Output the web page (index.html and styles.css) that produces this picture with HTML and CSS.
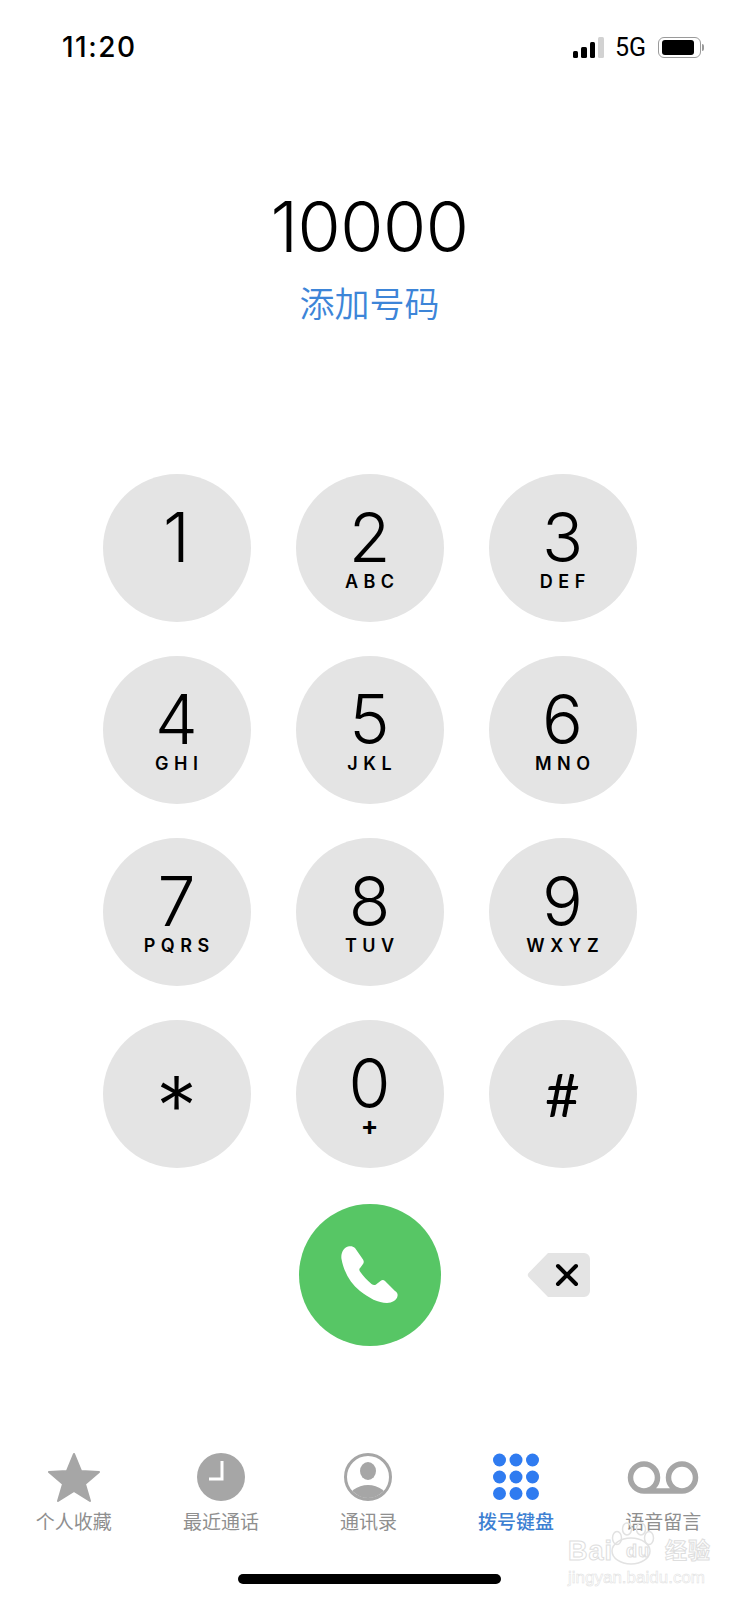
FILE: index.html
```html
<!DOCTYPE html>
<html lang="zh-CN">
<head>
    <meta charset="UTF-8">
    <title>拨号键盘</title>
    <link rel="stylesheet" href="styles.css">
</head>
<body>
    <div class="screen">
        <div class="status-bar">
            <span class="time">11:20</span>
            <div class="status-right">
                <div class="signal">
                    <span class="bar bar-1"></span>
                    <span class="bar bar-2"></span>
                    <span class="bar bar-3"></span>
                    <span class="bar bar-4"></span>
                </div>
                <span class="network">5G</span>
                <div class="battery">
                    <div class="battery-level"></div>
                </div>
                <span class="battery-cap"></span>
            </div>
        </div>

        <div class="number">10000</div>
        <div class="add-number">添加号码</div>

        <div class="keypad">
            <div class="key"><span class="digit">1</span></div>
            <div class="key"><span class="digit">2</span><span class="letters">ABC</span></div>
            <div class="key"><span class="digit">3</span><span class="letters">DEF</span></div>
            <div class="key"><span class="digit">4</span><span class="letters">GHI</span></div>
            <div class="key"><span class="digit">5</span><span class="letters">JKL</span></div>
            <div class="key"><span class="digit">6</span><span class="letters">MNO</span></div>
            <div class="key"><span class="digit">7</span><span class="letters">PQRS</span></div>
            <div class="key"><span class="digit">8</span><span class="letters">TUV</span></div>
            <div class="key"><span class="digit">9</span><span class="letters">WXYZ</span></div>
            <div class="key key-symbol"><span class="star">*</span></div>
            <div class="key"><span class="digit">0</span><span class="plus">+</span></div>
            <div class="key key-symbol"><span class="hash">#</span></div>
        </div>

        <div class="call-row">
            <div class="call-button">
                <svg width="58" height="58" viewBox="0 0 58 58">
                    <path fill="#fff" d="M7 .5C3 1.500-.5 7 .5 13 3 26 9 37 19 45c9 7 18 12 27 12 5 0 10-3 10.500-7 .5-2-.5-4-2.500-5L44 35c-1.500-1.500-3-1.500-4.500 0L35 38.500c-1.500 1-3 .5-4.500-.5-4.500-4-8.500-8-11.500-12.500-1-1.500-1-3 .5-4L22 18c1-1.500 1-3 0-4.500L14 2c-2-2-4.500-2-7-1.500z"/>
                </svg>
            </div>
            <svg class="backspace" width="64" height="46" viewBox="0 0 64 46">
                <path fill="#e4e4e4" d="M21 1h36a6 6 0 0 1 6 6v32a6 6 0 0 1-6 6H21L2 25.500a3.500 3.500 0 0 1 0-5z"/>
                <path stroke="#000" stroke-width="4" stroke-linecap="round" d="M31 14l18 18M49 14L31 32"/>
            </svg>
        </div>

        <div class="tab-bar">
            <div class="tab">
                <svg class="tab-icon" width="54" height="50" viewBox="0 0 54 50">
                    <path fill="#a6a6a6" stroke="#a6a6a6" stroke-width="2" stroke-linejoin="round" d="M27 2l7 17 18 1-14 12 5 17-16-10-16 10 5-17L2 20l18-1z"/>
                </svg>
                <span>个人收藏</span>
            </div>
            <div class="tab">
                <svg class="tab-icon" width="54" height="50" viewBox="0 0 54 50">
                    <circle cx="27" cy="25" r="24" fill="#a6a6a6"/>
                    <path fill="none" stroke="#fff" stroke-width="3" d="M28 9v18H15"/>
                </svg>
                <span>最近通话</span>
            </div>
            <div class="tab">
                <svg class="tab-icon" width="54" height="50" viewBox="0 0 54 50">
                    <defs>
                        <clipPath id="face"><circle cx="27" cy="25" r="21"/></clipPath>
                    </defs>
                    <circle cx="27" cy="25" r="22.500" fill="none" stroke="#a6a6a6" stroke-width="3"/>
                    <ellipse cx="27" cy="19" rx="8" ry="9" fill="#a6a6a6"/>
                    <ellipse cx="27" cy="48" rx="20" ry="15" fill="#a6a6a6" clip-path="url(#face)"/>
                </svg>
                <span>通讯录</span>
            </div>
            <div class="tab tab-active">
                <svg class="tab-icon" width="54" height="50" viewBox="0 0 54 50">
                    <g fill="#2f7bf0">
                        <circle cx="10.500" cy="8" r="6.500"/><circle cx="27" cy="8" r="6.500"/><circle cx="43.500" cy="8" r="6.500"/>
                        <circle cx="10.500" cy="25" r="6.500"/><circle cx="27" cy="25" r="6.500"/><circle cx="43.500" cy="25" r="6.500"/>
                        <circle cx="10.500" cy="41.500" r="6.500"/><circle cx="27" cy="41.500" r="6.500"/><circle cx="43.500" cy="41.500" r="6.500"/>
                    </g>
                </svg>
                <span>拨号键盘</span>
            </div>
            <div class="tab">
                <svg class="tab-icon" width="72" height="50" viewBox="0 0 72 50">
                    <path fill="none" stroke="#a6a6a6" stroke-width="5.500" d="M17 39h38M17 39a13.500 13.500 0 1 1 0-27 13.500 13.500 0 0 1 0 27zM55 39a13.500 13.500 0 1 1 0-27 13.500 13.500 0 0 1 0 27z"/>
                </svg>
                <span>语音留言</span>
            </div>
        </div>

        <div class="home-indicator"></div>

        <div class="watermark">
            <svg class="paw" width="50" height="48" viewBox="0 0 50 48">
                <g fill="none" stroke="#e2e2e2" stroke-width="1.500">
                    <ellipse cx="9" cy="16" rx="4.500" ry="6.500"/>
                    <ellipse cx="19" cy="7" rx="4.500" ry="6"/>
                    <ellipse cx="33" cy="7" rx="4.500" ry="6"/>
                    <ellipse cx="41" cy="16" rx="4.500" ry="6.500"/>
                    <ellipse cx="23" cy="29" rx="19" ry="13"/>
                </g>
            </svg>
            <div class="watermark-name">
                <span>Bai</span>
                <span class="watermark-du">du</span>
                <span class="watermark-cn">经验</span>
            </div>
            <div class="watermark-url">jingyan.baidu.com</div>
        </div>
    </div>
</body>
</html>
```

FILE: styles.css
```css
* {
    margin: 0;
    padding: 0;
    box-sizing: border-box;
}

body {
    background: #fff;
    font-family: Inter, "Noto Sans CJK SC", sans-serif;
    color: #000;
}

.screen {
    position: relative;
    width: 739px;
    height: 1600px;
    overflow: hidden;
    display: flex;
    flex-direction: column;
    align-items: center;
}

/* Status bar */
.status-bar {
    width: 100%;
    height: 94px;
    padding: 30px 35px 0 62px;
    display: flex;
    justify-content: space-between;
    align-items: flex-start;
}

.time {
    font-size: 28px;
    line-height: 34px;
    font-weight: 500;
    letter-spacing: 1.500px;
}

.status-right {
    display: flex;
    align-items: center;
    height: 34px;
}

.signal {
    display: flex;
    align-items: flex-end;
    gap: 3px;
    height: 21px;
}

.bar {
    width: 5.500px;
    background: #000;
    border-radius: 1.500px;
}

.bar-1 { height: 7px; }
.bar-2 { height: 11px; }
.bar-3 { height: 16px; }
.bar-4 { height: 21px; background: #d2d2d2; }

.network {
    margin-left: 11px;
    font-size: 25px;
    font-weight: 400;
    font-family: Roboto, sans-serif;
}

.battery {
    margin-left: 12px;
    width: 43px;
    height: 21px;
    padding: 2px 3px;
    border: 1.500px solid #9a9a9a;
    border-radius: 6px;
}

.battery-level {
    width: 32px;
    height: 100%;
    background: #000;
    border-radius: 3px;
}

.battery-cap {
    margin-left: 1px;
    width: 2px;
    height: 7px;
    background: #9a9a9a;
    border-radius: 0 2px 2px 0;
}

/* Number display */
.number {
    margin-top: 98px;
    font-size: 70px;
    line-height: 70px;
    font-weight: 350;
    letter-spacing: -0.5px;
}

.add-number {
    margin-top: 18px;
    font-family: "Noto Sans CJK SC", sans-serif;
    font-size: 35px;
    line-height: 44px;
    font-weight: 350;
    color: #3d85d8;
}

/* Keypad */
.keypad {
    margin-top: 150px;
    display: grid;
    grid-template-columns: repeat(3, 148px);
    gap: 34px 45px;
}

.key {
    width: 148px;
    height: 148px;
    border-radius: 50%;
    background: #e4e4e4;
    display: flex;
    flex-direction: column;
    align-items: center;
    padding-top: 33px;
}

.key-symbol {
    padding-top: 0;
    justify-content: center;
}

.digit {
    font-size: 68px;
    line-height: 60px;
    font-weight: 350;
}

.letters {
    margin-top: 5px;
    font-size: 18px;
    line-height: 20px;
    font-weight: 600;
    letter-spacing: 5.500px;
    margin-right: -5.500px;
}

.plus {
    font-size: 26px;
    line-height: 26px;
    font-weight: 700;
}

.star {
    font-size: 82px;
    line-height: 82px;
    font-weight: 350;
    margin-top: 26px;
}

.hash {
    font-family: Lato, sans-serif;
    font-size: 60px;
    line-height: 60px;
    font-weight: 400;
}

/* Call row */
.call-row {
    margin-top: 36px;
    width: 100%;
    display: flex;
    justify-content: center;
    align-items: center;
    position: relative;
}

.call-button {
    width: 142px;
    height: 142px;
    border-radius: 50%;
    background: #57c665;
    display: flex;
    align-items: center;
    justify-content: center;
}

.backspace {
    position: absolute;
    left: 527px;
    top: 48px;
}

/* Tab bar */
.tab-bar {
    margin-top: 106px;
    padding-right: 2px;
    width: 100%;
    display: grid;
    grid-template-columns: repeat(5, 1fr);
}

.tab {
    display: flex;
    flex-direction: column;
    align-items: center;
    font-family: "Noto Sans CJK SC", sans-serif;
    font-size: 19px;
    line-height: 26px;
    font-weight: 400;
    color: #8f8f8f;
}

.tab-icon {
    height: 50px;
    margin-bottom: 6px;
}

.tab-active {
    color: #3d80d2;
    font-weight: 500;
}

.home-indicator {
    margin-top: 40px;
    width: 263px;
    height: 10px;
    border-radius: 5px;
    background: #000;
}

/* Watermark sits over the tab bar */
.watermark {
    position: absolute;
    left: 568px;
    top: 1522px;
    width: 132px;
    color: #fff;
}

.paw {
    position: absolute;
    left: 40px;
    top: 0;
}

.watermark-name {
    margin-top: 17px;
    display: flex;
    align-items: center;
    font-family: "Liberation Sans", "Noto Sans CJK SC", sans-serif;
    font-size: 27px;
    line-height: 24px;
    font-weight: 700;
    letter-spacing: 1px;
    white-space: nowrap;
    -webkit-text-stroke: 1px #dedede;
}

.watermark-du {
    margin-left: 13px;
    font-size: 18px;
}

.watermark-cn {
    margin-left: 15px;
    font-size: 22px;
}

.watermark-url {
    margin-top: 5px;
    font-family: "Liberation Sans", sans-serif;
    font-size: 17px;
    line-height: 20px;
    -webkit-text-stroke: 0.500px #dedede;
    white-space: nowrap;
}
```
